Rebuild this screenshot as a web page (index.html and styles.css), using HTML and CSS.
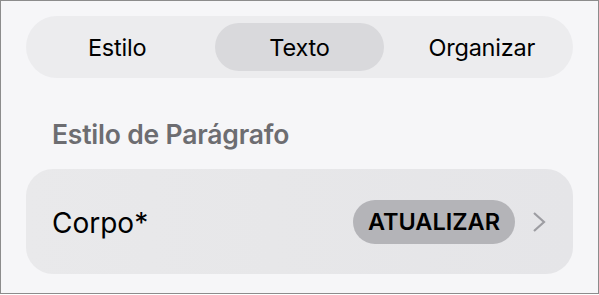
FILE: index.html
```html
<!DOCTYPE html>
<html lang="pt">
<head>
    <meta charset="UTF-8">
    <meta name="viewport" content="width=device-width, initial-scale=1.0">
    <title>Formatar</title>
    <link rel="stylesheet" href="styles.css">
</head>
<body>
    <div class="panel">
        <!-- Tabs -->
        <div class="segmented">
            <div class="segment">Estilo</div>
            <div class="segment active"><span>Texto</span></div>
            <div class="segment">Organizar</div>
        </div>

        <h2 class="section-title">Estilo de Parágrafo</h2>

        <!-- Paragraph style row -->
        <div class="style-row">
            <span class="style-name">Corpo*</span>
            <span class="update-btn">ATUALIZAR</span>
            <svg class="chevron" viewBox="0 0 14 22">
                <path d="M2 2l10 9-10 9"/>
            </svg>
        </div>
    </div>
</body>
</html>
```

FILE: styles.css
```css
* {
    margin: 0;
    padding: 0;
    box-sizing: border-box;
}

body {
    font-family: Inter, "Noto Sans", sans-serif;
    background: #ffffff;
}

.panel {
    width: 599px;
    height: 294px;
    border: 1px solid #8c8c8c;
    background: #f6f6f8;
    padding: 15px 25px 0 25px;
}

.segmented {
    display: grid;
    grid-template-columns: 1fr 1fr 1fr;
    height: 62px;
    border-radius: 31px;
    background: #ececee;
}

.segment {
    display: flex;
    align-items: center;
    justify-content: center;
    font-size: 23.5px;
    color: #000;
    letter-spacing: -0.2px;
}

.segment.active {
    padding: 7px;
}

.segment.active span {
    flex: 1;
    height: 100%;
    display: flex;
    align-items: center;
    justify-content: center;
    border-radius: 24px;
    background: #d9d9dc;
}

.section-title {
    font-size: 26.5px;
    line-height: 30px;
    font-weight: 600;
    color: #6d6d71;
    margin: 41px 0 20px 26px;
    letter-spacing: -0.2px;
}

.style-row {
    display: flex;
    align-items: center;
    height: 105px;
    border-radius: 27px;
    background: linear-gradient(90deg, #e9e9eb 0%, #e7e7e9 45%, #e5e5e8 100%);
    padding: 0 27px 0 26px;
}

.style-name {
    flex: 1;
    font-size: 28px;
    color: #000;
    padding-top: 2px;
}

.update-btn {
    display: flex;
    align-items: center;
    justify-content: center;
    width: 162px;
    height: 44px;
    border-radius: 22px;
    background: #b4b4b8;
    font-size: 23.5px;
    font-weight: 600;
    color: #000;
}

.chevron {
    width: 14px;
    height: 22px;
    margin-left: 17px;
    fill: none;
    stroke: #9d9da2;
    stroke-width: 2.2;
}
```
